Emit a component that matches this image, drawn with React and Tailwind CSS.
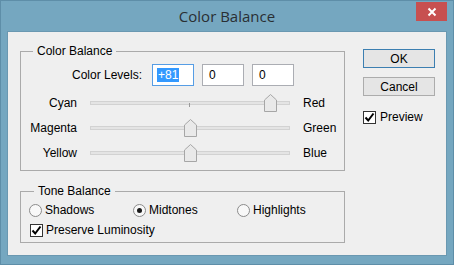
import React from "react";

const sliders = [
  { left: "Cyan", right: "Red", value: 81 },
  { left: "Magenta", right: "Green", value: 0 },
  { left: "Yellow", right: "Blue", value: 0 },
];

const Thumb = () => (
  <svg width="13" height="18" viewBox="0 0 13 18">
    <polygon
      points="0.5,6 6.5,0.5 12.5,6 12.5,17.5 0.5,17.5"
      fill="#e9e9e9"
      stroke="#a6a6a6"
    />
  </svg>
);

const Check = () => (
  <span className="w-[13px] h-[13px] border border-[#333] bg-white flex items-center justify-center">
    <svg width="11" height="11" viewBox="0 0 11 11">
      <path d="M1.5 5.5 L4.2 8.5 L9.5 1.5" fill="none" stroke="#000" strokeWidth="2" />
    </svg>
  </span>
);

const Radio = ({ on }) => (
  <span className="w-[13px] h-[13px] rounded-full border border-[#8b8b8b] bg-[#f8f8f8] flex items-center justify-center">
    {on && <span className="w-[5px] h-[5px] rounded-full bg-[#1a1a1a]" />}
  </span>
);

const SliderRow = ({ left, right, value }) => (
  <div className="h-[25px] flex items-center">
    <div className="w-[56px] text-right">{left}</div>
    <div className="ml-[13px] w-[200px] h-[25px] relative flex items-center">
      <div className="w-full h-[4px] border border-[#d2d2d2] bg-[#e4e4e4]" />
      <div className="absolute left-[99px] top-[13px] w-px h-[4px] bg-[#9a9a9a]" />
      <div className="absolute top-[4px]" style={{ left: ((value + 100) / 200) * 198 - 5 }}>
        <Thumb />
      </div>
    </div>
    <div className="ml-[13px]">{right}</div>
  </div>
);

export default function App() {
  return (
    <div
      className="w-[454px] h-[265px] bg-[#75a7c0] border border-[#5e8ea8] flex flex-col text-[12px] text-black"
      style={{ fontFamily: "'Liberation Sans', Arial, sans-serif" }}
    >
      {/* title bar */}
      <div className="h-[30px] relative flex items-center justify-center">
        <span
          className="text-[15px] text-[#2a2f33] pt-[1px]"
          style={{ fontFamily: "'Open Sans', 'Noto Sans', sans-serif" }}
        >
          Color Balance
        </span>
        <div className="absolute right-[6px] top-[1px] w-[31px] h-[19px] bg-[#c75050] flex items-center justify-center">
          <svg width="10" height="10" viewBox="0 0 10 10">
            <path d="M1.5 1.5 L8.5 8.5 M8.5 1.5 L1.5 8.5" stroke="#fff" strokeWidth="2" />
          </svg>
        </div>
      </div>

      {/* content */}
      <div className="mx-[6px] h-[225px] bg-[#efefef] border border-[#6a98b1] flex">
        <div className="pl-[12px] pt-[12px]">
          <fieldset className="w-[325px] border border-[#aaaaaa] px-0 pb-[5px]">
            <legend className="ml-[12px] px-[4px] leading-[14px]">Color Balance</legend>
            <div className="pt-[6px]">
              <div className="h-[22px] flex items-center">
                <div className="w-[121px] text-right">Color Levels:</div>
                <div className="ml-[10px] w-[42px] h-[22px] border border-[#569de5] bg-white flex items-center pl-[4px]">
                  <span className="bg-[#3399ff] text-white leading-[14px] px-px">+81</span>
                </div>
                <div className="ml-[8px] w-[42px] h-[22px] border border-[#abadb3] bg-white flex items-center pl-[6px]">0</div>
                <div className="ml-[8px] w-[42px] h-[22px] border border-[#abadb3] bg-white flex items-center pl-[6px]">0</div>
              </div>
              <div className="mt-[4px]">
                {sliders.map((s, i) => (
                  <SliderRow key={i} {...s} />
                ))}
              </div>
            </div>
          </fieldset>

          <fieldset className="mt-[13px] w-[325px] border border-[#aaaaaa] px-0 pb-[5px]">
            <legend className="ml-[13px] px-[4px] leading-[14px]">Tone Balance</legend>
            <div className="pt-[5px] pl-[8px]">
              <div className="h-[14px] flex items-center">
                <div className="w-[104px] flex items-center gap-[3px]">
                  <Radio />
                  <span>Shadows</span>
                </div>
                <div className="w-[104px] flex items-center gap-[3px]">
                  <Radio on />
                  <span>Midtones</span>
                </div>
                <div className="flex items-center gap-[3px]">
                  <Radio />
                  <span>Highlights</span>
                </div>
              </div>
              <div className="mt-[6px] h-[14px] flex items-center gap-[3px] pl-px">
                <Check />
                <span>Preserve Luminosity</span>
              </div>
            </div>
          </fieldset>
        </div>

        <div className="ml-[18px] pt-[17px] flex flex-col">
          <button className="w-[72px] h-[19px] border border-[#3c7fb1] bg-[#e5e5e5] flex items-center justify-center">
            OK
          </button>
          <button className="mt-[9px] w-[72px] h-[19px] border border-[#acacac] bg-[#e5e5e5] flex items-center justify-center">
            Cancel
          </button>
          <div className="mt-[12px] flex items-center gap-[4px]">
            <Check />
            <span>Preview</span>
          </div>
        </div>
      </div>
    </div>
  );
}
